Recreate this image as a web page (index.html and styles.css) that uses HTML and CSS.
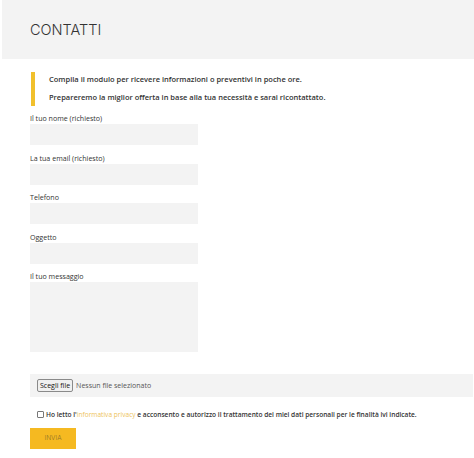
FILE: index.html
```html
<!DOCTYPE html>
<html>
    <head>
        <meta charset="utf-8">
        <link rel="stylesheet" href="styles.css">
    </head>
    <body>
        <div class="page-head">
            <h1>CONTATTI</h1>
        </div>

        <div class="content">
            <div class="notice">
                <p>Compila il modulo per ricevere informazioni o preventivi in poche ore.</p>
                <p>Prepareremo la miglior offerta in base alla tua necessità e sarai ricontattato.</p>
            </div>

            <form class="contact-form">
                <label for="nome">Il tuo nome (richiesto)</label>
                <input type="text" id="nome">

                <label for="email">La tua email (richiesto)</label>
                <input type="text" id="email">

                <label for="telefono">Telefono</label>
                <input type="text" id="telefono">

                <label for="oggetto">Oggetto</label>
                <input type="text" id="oggetto">

                <label for="messaggio">Il tuo messaggio</label>
                <textarea id="messaggio"></textarea>

                <div class="file-row">
                    <span class="file-btn">Scegli file</span>
                    <span class="file-name">Nessun file selezionato</span>
                </div>

                <p class="privacy">
                    <span class="check"></span>Ho letto l'<a href="#">informativa privacy</a> e acconsento e autorizzo il trattamento dei miei dati personali per le finalità ivi indicate.
                </p>

                <button type="button" class="send-btn">INVIA</button>
            </form>
        </div>
    </body>
</html>
```

FILE: styles.css
```css
body {
    margin: 0;
    font-family: "Open Sans", sans-serif;
    background-color: #ffffff;
    color: #333;
}

.page-head {
    margin-left: 2px;
    height: 59px;
    padding-left: 28px;
    background-color: #f3f3f3;
    display: flex;
    align-items: center;
}

h1 {
    margin: 0;
    font-family: Inter, sans-serif;
    font-size: 14.5px;
    font-weight: 300;
    color: #333;
}

.content {
    padding-left: 30px;
}

.notice {
    margin-top: 13px;
    margin-left: 1px;
    border-left: 4px solid #f1c02c;
    padding: 0 0 0 14px;
}

.notice p {
    margin: 0;
    font-size: 7.5px;
    font-weight: 600;
    line-height: 18px;
    color: #333;
}

.notice p:first-child {
    line-height: 14px;
    padding-bottom: 2px;
}

.contact-form {
    display: flex;
    flex-direction: column;
    align-items: flex-start;
    margin-top: 6px;
}

label {
    display: block;
    font-size: 7.1px;
    line-height: 12px;
    color: #333;
}

input,
textarea {
    width: 168px;
    height: 21px;
    margin: 0 0 6.6px 0;
    padding: 0;
    border: none;
    background-color: #f3f3f3;
    box-sizing: border-box;
}

textarea {
    height: 70px;
    resize: none;
}

.file-row {
    align-self: stretch;
    display: flex;
    align-items: center;
    gap: 3px;
    height: 23px;
    margin-top: 15px;
    margin-right: 1px;
    padding-left: 7px;
    background-color: #f3f3f3;
    font-size: 7px;
}

.file-btn {
    padding: 1px 2px;
    border: 1px solid #8a8a8a;
    border-radius: 2px;
    background-color: #f0f0f0;
    color: #111;
}

.file-name {
    color: #555;
}

.privacy {
    margin: 13px 0 0 0;
    padding-left: 7px;
    font-size: 6.6px;
    font-weight: 600;
    line-height: 10px;
    color: #333;
    white-space: nowrap;
}

.privacy a {
    color: #eec35a;
    text-decoration: none;
    font-weight: 400;
}

.check {
    display: inline-block;
    vertical-align: -1px;
    width: 5px;
    height: 5px;
    margin-right: 2px;
    border: 1px solid #777;
    border-radius: 1px;
    background-color: #fff;
}

.send-btn {
    margin-top: 8px;
    width: 46px;
    height: 21px;
    border: none;
    background-color: #f5b921;
    font-family: Inter, sans-serif;
    font-size: 6.5px;
    font-weight: 300;
    color: #8c6f2a;
    cursor: pointer;
}
```
